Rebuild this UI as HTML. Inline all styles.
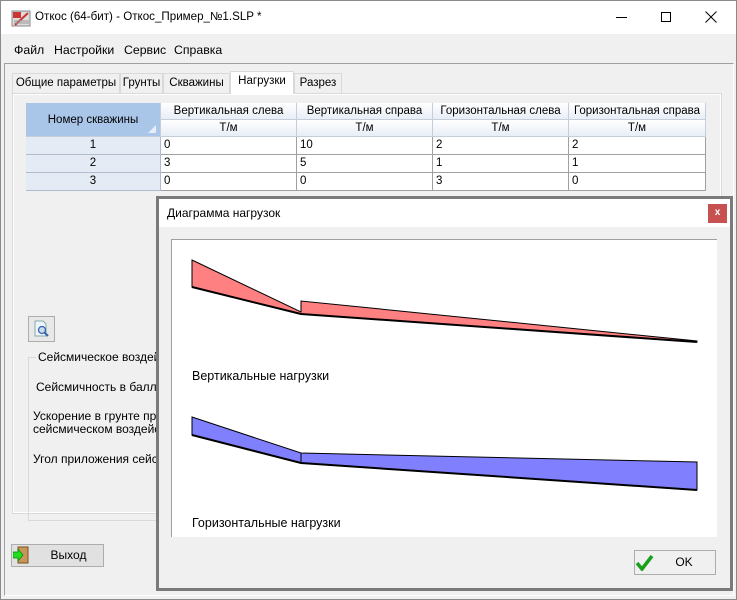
<!DOCTYPE html>
<html><head><meta charset="utf-8"><style>
*{margin:0;padding:0;box-sizing:border-box}
body{width:737px;height:600px;background:#f0f0f0;font-family:"Liberation Sans","DejaVu Sans",sans-serif;font-size:12px;color:#000;position:relative;overflow:hidden}
.a{position:absolute;white-space:nowrap}
.win{left:0;top:0;width:737px;height:600px;border:1px solid #8a8a8a;background:#f0f0f0}
.tb{left:1px;top:1px;width:735px;height:33px;background:#fff}
.cell{position:absolute;border-right:1px solid #a0a0a0;border-bottom:1px solid #a0a0a0;font-size:11.5px;line-height:17px;white-space:nowrap;overflow:hidden}
.h{background:linear-gradient(#fff,#e8eef7);text-align:center;border-right:1px solid #c5cfdc;border-bottom:1px solid #c5cfdc}
.r{background:#e4ebf5;text-align:center;border-color:#b0bccc}
.v{background:#fff;padding-left:3px}
.tab{position:absolute;top:73px;height:20px;border:1px solid #d9d9d9;border-bottom:none;background:#f0f0f0;font-size:11.5px;line-height:19px;text-align:center;white-space:nowrap}
.m{top:43px;font-size:12.3px}
</style></head><body>
<div class="a win"></div>
<div class="a tb"></div>
<svg class="a" style="left:11px;top:9px" width="20" height="18"><rect x="1" y="2" width="18" height="15" fill="#ddd" stroke="#888"/><path d="M2 3h8v6h-8z" fill="#c33"/><path d="M4 16 L17 4" stroke="#c33" stroke-width="2"/><path d="M3 12h15M3 14h15" stroke="#999"/></svg>
<div class="a" style="left:35px;top:10px;font-size:11.6px">Откос (64-бит) - Откос_Пример_№1.SLP *</div>
<div class="a" style="left:616px;top:17px;width:11px;height:1px;background:#000"></div>
<div class="a" style="left:661px;top:12px;width:10px;height:10px;border:1px solid #000"></div>
<svg class="a" style="left:705px;top:11px" width="12" height="12"><path d="M0.5 0.5L11.5 11.5M11.5 0.5L0.5 11.5" stroke="#000"/></svg>
<div class="a m" style="left:14px">Файл</div>
<div class="a m" style="left:54px">Настройки</div>
<div class="a m" style="left:124px">Сервис</div>
<div class="a m" style="left:174px">Справка</div>
<div class="a" style="left:4px;top:63px;width:730px;height:533px;border-top:1px solid #a0a0a0;border-left:1px solid #a0a0a0;border-bottom:1px solid #fff;border-right:1px solid #fff"></div>
<div class="tab" style="left:12px;width:108px">Общие параметры</div>
<div class="tab" style="left:120px;width:43px">Грунты</div>
<div class="tab" style="left:163px;width:67px">Скважины</div>
<div class="tab" style="left:230px;top:71px;height:23px;width:64px;background:#fff;z-index:2">Нагрузки</div>
<div class="tab" style="left:294px;width:48px">Разрез</div>
<div class="a" style="left:12px;top:93px;width:710px;height:421px;border:1px solid #d9d9d9;background:#f0f0f0;box-shadow:inset 1px 1px 0 #fff,inset -1px -1px 0 #fff"></div>
<!-- grid -->
<div class="cell" style="left:26px;top:103px;width:135px;height:34px;background:#a9c5e8;text-align:center;line-height:34px;border-color:#c5cfdc">Номер скважины</div>
<svg class="a" style="left:148px;top:125px" width="9" height="9"><path d="M8 0V8H0Z" fill="#e8eef7"/></svg>
<div class="cell h" style="left:161px;top:103px;width:136px;height:17px">Вертикальная слева</div>
<div class="cell h" style="left:297px;top:103px;width:136px;height:17px">Вертикальная справа</div>
<div class="cell h" style="left:433px;top:103px;width:136px;height:17px">Горизонтальная слева</div>
<div class="cell h" style="left:569px;top:103px;width:137px;height:17px">Горизонтальная справа</div>
<div class="cell h" style="left:161px;top:120px;width:136px;height:17px">Т/м</div>
<div class="cell h" style="left:297px;top:120px;width:136px;height:17px">Т/м</div>
<div class="cell h" style="left:433px;top:120px;width:136px;height:17px">Т/м</div>
<div class="cell h" style="left:569px;top:120px;width:137px;height:17px">Т/м</div>
<div class="cell r" style="left:26px;top:137px;width:135px;height:18px">1</div>
<div class="cell v" style="left:161px;top:137px;width:136px;height:18px">0</div>
<div class="cell v" style="left:297px;top:137px;width:136px;height:18px">10</div>
<div class="cell v" style="left:433px;top:137px;width:136px;height:18px">2</div>
<div class="cell v" style="left:569px;top:137px;width:137px;height:18px">2</div>
<div class="cell r" style="left:26px;top:155px;width:135px;height:18px">2</div>
<div class="cell v" style="left:161px;top:155px;width:136px;height:18px">3</div>
<div class="cell v" style="left:297px;top:155px;width:136px;height:18px">5</div>
<div class="cell v" style="left:433px;top:155px;width:136px;height:18px">1</div>
<div class="cell v" style="left:569px;top:155px;width:137px;height:18px">1</div>
<div class="cell r" style="left:26px;top:173px;width:135px;height:18px">3</div>
<div class="cell v" style="left:161px;top:173px;width:136px;height:18px">0</div>
<div class="cell v" style="left:297px;top:173px;width:136px;height:18px">0</div>
<div class="cell v" style="left:433px;top:173px;width:136px;height:18px">3</div>
<div class="cell v" style="left:569px;top:173px;width:137px;height:18px">0</div>
<!-- left panel -->
<div class="a" style="left:28px;top:316px;width:27px;height:26px;border:1px solid #adadad;background:#e8e8e8"></div>
<svg class="a" style="left:33px;top:320px" width="18" height="18"><path d="M2 1h8l3 3v12H2z" fill="#eef4fb" stroke="#8aa"/><circle cx="9" cy="10" r="3.5" fill="#cde" stroke="#36a" stroke-width="1.3"/><path d="M11.5 12.5L15 16" stroke="#36a" stroke-width="2"/></svg>
<div class="a" style="left:28px;top:357px;width:140px;height:164px;border:1px solid #d9d9d9"></div>
<div class="a" style="left:36px;top:350px;background:#f0f0f0;padding:0 2px">Сейсмическое воздейс</div>
<div class="a" style="left:36px;top:380px">Сейсмичность в баллах</div>
<div class="a" style="left:33px;top:410px;line-height:13px">Ускорение в грунте при<br>сейсмическом воздейст</div>
<div class="a" style="left:33px;top:452px">Угол приложения сейсм</div>
<div class="a" style="left:11px;top:544px;width:93px;height:23px;border:1px solid #adadad;background:#e1e1e1;text-align:center;line-height:21px;padding-left:22px">Выход</div>
<svg class="a" style="left:13px;top:546px" width="17" height="18"><rect x="5" y="1" width="10" height="16" fill="#c8965a" stroke="#7a5020"/><path d="M0 6h5V3l5 6-5 6v-3H0z" fill="#2d2" stroke="#080" stroke-width=".7"/></svg>
<!-- dialog -->
<div class="a" style="left:156px;top:196px;width:577px;height:395px;border:3px solid #7a7a7a;background:#f0f0f0"></div>
<div class="a" style="left:159px;top:199px;width:571px;height:28px;background:#fff"></div>
<div class="a" style="left:167px;top:206px">Диаграмма нагрузок</div>
<div class="a" style="left:708px;top:204px;width:19px;height:19px;background:#c75050;color:#fff;font-size:10px;font-weight:bold;text-align:center;line-height:18px">x</div>
<div class="a" style="left:171px;top:239px;width:546px;height:298px;background:#fff;border-top:1px solid #a0a0a0;border-left:1px solid #a0a0a0"></div>
<svg class="a" style="left:0;top:0" width="737" height="600">
<polygon points="192,260 301,312 301,301 697,341 697,342 301,314 192,287" fill="#ff8080" stroke="#000" stroke-width="1"/>
<path d="M192 287L301 314L697 342" stroke="#000" stroke-width="2" fill="none"/>
<polygon points="192,417 301,453 697,462 697,490 301,463 192,435" fill="#8080ff" stroke="#000" stroke-width="1"/>
<path d="M301 453V463" stroke="#000"/>
<path d="M192 435L301 463L697 490" stroke="#000" stroke-width="2" fill="none"/>
</svg>
<div class="a" style="left:192px;top:369px;font-size:12.5px">Вертикальные нагрузки</div>
<div class="a" style="left:192px;top:516px;font-size:12.5px">Горизонтальные нагрузки</div>
<div class="a" style="left:634px;top:550px;width:82px;height:25px;border:1px solid #adadad;background:#f0f0f0;text-align:center;line-height:23px;padding-left:18px">OK</div>
<svg class="a" style="left:636px;top:555px" width="18" height="16"><path d="M1 8l5 6L16 1" stroke="#19a019" stroke-width="3.5" fill="none"/></svg>
</body></html>
